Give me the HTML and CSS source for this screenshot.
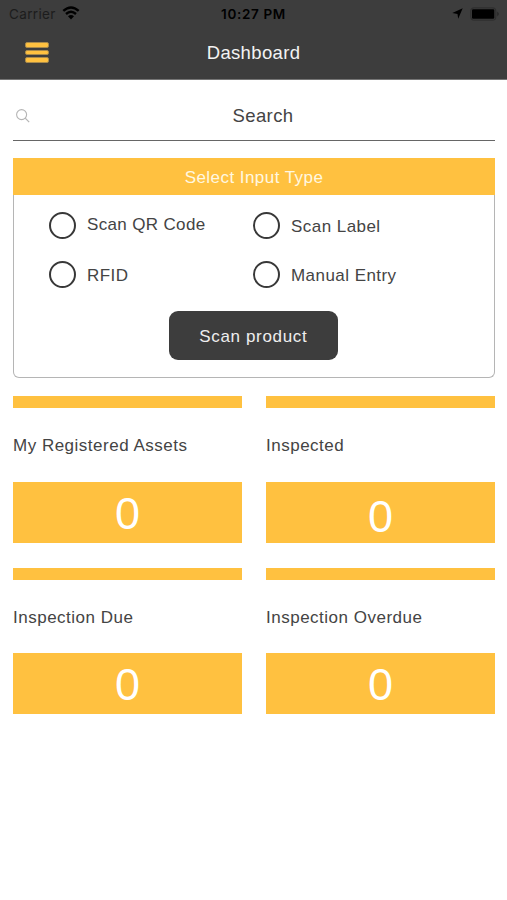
FILE: index.html
```html
<!DOCTYPE html>
<html lang="en">
<head>
<meta charset="utf-8">
<title>Dashboard</title>
<link rel="stylesheet" href="styles.css">
</head>
<body>
<header class="header">
  <div class="status">
    <div class="status-left"><span class="carrier">Carrier</span>
      <svg class="wifi" width="18" height="14" viewBox="0 0 18 14"><path d="M1.3 4.9Q9-2 16.7 4.9M4 8Q9 3.6 14 8" fill="none" stroke="#000" stroke-width="2.4"/><path d="M6 10.3Q9 7.7 12 10.3L9 13.6Z"/></svg>
    </div>
    <span class="time">10:27 PM</span>
    <div class="status-right">
      <svg width="11" height="11" viewBox="0 0 11 11"><path d="M10.7.2 6.2 10.8 5.5 5.9.3 5.1Z"/></svg>
      <svg width="30" height="14" viewBox="0 0 30 14"><rect x=".8" y=".8" width="25" height="12.4" rx="3.5" fill="none" stroke="#2f2f2f" stroke-width="1.2"/><rect x="2" y="2.2" width="22.3" height="9.6" rx="1.2"/><path d="M27.4 4.6q2.6 2.4 0 4.8z" fill="#242424"/></svg>
    </div>
  </div>
  <div class="navbar">
    <div class="menu"><i></i><i></i><i></i></div>
    <h1 class="title">Dashboard</h1>
  </div>
</header>
<main class="main">
  <div class="search">
    <svg width="15" height="15" viewBox="0 0 15 15"><circle cx="5.6" cy="5.6" r="5" fill="none" stroke="#b5b5b5" stroke-width="1.1"/><path d="m9.2 9.2 4 4" stroke="#b5b5b5" stroke-width="1.2"/></svg>
    <span class="search-text">Search</span>
  </div>
  <section class="panel">
    <h2 class="panel-head">Select Input Type</h2>
    <div class="panel-body">
      <div class="options">
        <div class="option"><span class="radio"></span><span class="raised">Scan QR Code</span></div>
        <div class="option"><span class="radio"></span><span>Scan Label</span></div>
        <div class="option"><span class="radio"></span><span>RFID</span></div>
        <div class="option"><span class="radio"></span><span>Manual Entry</span></div>
      </div>
      <div class="scan">Scan product</div>
    </div>
  </section>
  <section class="cards">
    <div class="card"><div class="bar"></div><div class="label">My Registered Assets</div><div class="value">0</div></div>
    <div class="card"><div class="bar"></div><div class="label">Inspected</div><div class="value lowered">0</div></div>
    <div class="card"><div class="bar"></div><div class="label">Inspection Due</div><div class="value">0</div></div>
    <div class="card"><div class="bar"></div><div class="label">Inspection Overdue</div><div class="value">0</div></div>
  </section>
</main>
</body>
</html>
```
FILE: styles.css
```css
* { box-sizing: border-box; }
body {
  margin: 0;
  height: 900px;
  background: #fff;
  color: #444;
  font: 17px/20px "Liberation Sans", Arial, sans-serif;
  letter-spacing: .45px;
}
svg { display: block; flex: none; }
.header { height: 79.5px; background: #3d3d3d; border-bottom: 1px solid #757575; }
.status {
  display: grid;
  grid-template-columns: 1fr auto 1fr;
  align-items: center;
  height: 27px;
  padding: 0 7px 0 9px;
  color: #111;
  font: 13.5px/16px Inter, sans-serif;
  letter-spacing: .35px;
}
.status-left { display: flex; align-items: center; gap: 6px; }
.carrier { color: #1c1c1c; }
.wifi { margin-top: -2px; }
.time { margin-left: -2px; color: #000; font-weight: 600; letter-spacing: .65px; }
.status-right { display: flex; align-items: center; justify-content: flex-end; gap: 7px; }
.navbar { display: grid; grid-template-columns: 1fr auto 1fr; align-items: center; height: 51px; padding: 0 25px; }
.menu { display: grid; gap: 2.3px; width: 24px; }
.menu i { height: 5.3px; border-radius: 2px; background: #ffc140; border: .5px solid #a98a4b; }
.title { margin: 1px 0 0; color: #f3f3f3; font-size: 18.5px; font-weight: 400; letter-spacing: .35px; }
.main { padding: 0 12px 0 13px; }
.search {
  display: grid;
  grid-template-columns: 15px 1fr;
  align-items: center;
  height: 61px;
  padding: 13px 0 0 3px;
  border-bottom: 1.5px solid #666;
}
.search-text { font-size: 18.5px; letter-spacing: .4px; text-align: center; }
.panel { margin-top: 17px; }
.panel-head {
  margin: 0;
  height: 37px;
  background: #ffc140;
  color: #fff8e0;
  font-size: 17px;
  font-weight: 400;
  line-height: 40px;
  text-align: center;
}
.panel-body { height: 183px; padding: 17px 0 0 35px; border: 1.5px solid #b5b5b5; border-top: 0; border-radius: 0 0 6px 6px; }
.options { display: grid; grid-template-columns: 204px 1fr; row-gap: 21px; }
.option { display: flex; align-items: center; gap: 11px; height: 28px; }
.option span:last-child { margin-top: 2px; }
.option .raised { padding-bottom: 4px; letter-spacing: .35px; }
.radio { flex: none; width: 27px; height: 27px; border: 2.4px solid #383838; border-radius: 50%; }
.scan {
  width: 169px;
  height: 49px;
  margin: 22px 0 0 119.8px;
  border-radius: 9px;
  background: #3d3d3d;
  color: #eee;
  line-height: 51px;
  letter-spacing: .65px;
  text-align: center;
}
.cards { display: grid; grid-template-columns: 1fr 1fr; gap: 24.7px 24px; margin-top: 18.8px; }
.bar { height: 12px; background: #ffc140; }
.label { height: 73.7px; line-height: 76px; letter-spacing: .5px; }
.value { height: 61px; background: #ffc140; color: #fff; font-size: 45px; line-height: 63px; letter-spacing: 0; text-align: center; }
.lowered { line-height: 69px; }
```
